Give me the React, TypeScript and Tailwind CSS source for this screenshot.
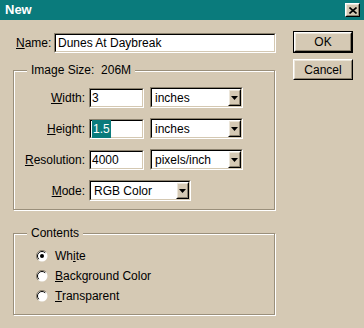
import React from 'react';

const font = "font-['Liberation_Sans',Arial,sans-serif]";

function Sunken({ className, children }: { className: string; children?: React.ReactNode }) {
  return (
    <div className={`border border-t-[#8b816e] border-l-[#8b816e] border-r-white border-b-white ${className}`}>
      <div className="flex h-full items-center border border-t-black border-l-black border-r-[#d4c8b2] border-b-[#d4c8b2] bg-white">
        {children}
      </div>
    </div>
  );
}

function Raised({ className, children }: { className: string; children?: React.ReactNode }) {
  return (
    <div className={`border border-t-white border-l-white border-r-black border-b-black bg-[#d5c9b4] ${className}`}>
      <div className="flex h-full items-center justify-center border border-t-[#ece6da] border-l-[#ece6da] border-r-[#8b816e] border-b-[#8b816e]">
        {children}
      </div>
    </div>
  );
}

function Select({ value, width }: { value: string; width: string }) {
  return (
    <Sunken className={`h-[21px] ${width}`}>
      <span className="flex-1 pl-[3px] text-black">{value}</span>
      <Raised className="h-full w-[13px]">
        <svg width="7" height="4" viewBox="0 0 7 4">
          <path d="M0 0h7L3.5 4z" fill="#000" />
        </svg>
      </Raised>
    </Sunken>
  );
}

function Radio({ checked, children }: { checked?: boolean; children: React.ReactNode }) {
  return (
    <div className="flex h-[16px] items-center">
      <svg width="12" height="12" viewBox="0 0 12 12" className="ml-[22px]">
        <circle cx="6" cy="6" r="5.5" fill="#fff" />
        <path d="M10 2A5.5 5.5 0 0 0 2 10" stroke="#8b816e" strokeWidth="1" fill="none" />
        <path d="M9.2 2.8A4.5 4.5 0 0 0 2.8 9.2" stroke="#000" strokeWidth="1" fill="none" />
        {checked && <circle cx="6" cy="6" r="2" fill="#000" />}
      </svg>
      <span className="ml-[7px]">{children}</span>
    </div>
  );
}

function Group({ label, className, children }: { label: string; className: string; children: React.ReactNode }) {
  return (
    <div
      className={`relative w-[262px] border border-[#9a8f7b] shadow-[1px_1px_0_#fff,inset_1px_1px_0_#fff] ${className}`}
    >
      <span className="absolute -top-[8px] left-[13px] whitespace-pre bg-[#d5c9b4] px-[4px] leading-[14px]">
        {label}
      </span>
      {children}
    </div>
  );
}

function Row({ label, children }: { label: React.ReactNode; children: React.ReactNode }) {
  return (
    <div className="flex items-center">
      <span className="mr-[4px] w-[71px] text-right">{label}</span>
      {children}
    </div>
  );
}

export default function App() {
  return (
    <div className={`h-[328px] w-[364px] overflow-hidden bg-[#d5c9b4] text-[12px] text-black ${font}`}>
      {/* barra de título */}
      <div className="flex h-[20px] items-center justify-between bg-[#0a7b7c] pl-[5px] pr-[4px]">
        <span className="text-[13px] font-bold text-white">New</span>
        <Raised className="h-[14px] w-[15px]">
          <svg width="8" height="7" viewBox="0 0 8 7">
            <path d="M0.5 0.5l7 6M7.5 0.5l-7 6" stroke="#000" strokeWidth="1.6" />
          </svg>
        </Raised>
      </div>

      <div className="flex">
        <div className="ml-[13px] w-[263px]">
          <div className="mt-[13px] flex h-[20px] items-center">
            <span className="ml-[3px] w-[38px]">
              <u>N</u>ame:
            </span>
            <Sunken className="h-[20px] w-[222px]">
              <span className="pl-[2px]">Dunes At Daybreak</span>
            </Sunken>
          </div>

          <Group label="Image Size:  206M" className="mt-[17px] h-[140px]">
            <div className="flex flex-col gap-[10px] pt-[16px]">
              <Row
                label={
                  <>
                    <u>W</u>idth:
                  </>
                }
              >
                <Sunken className="h-[20px] w-[55px]">
                  <span className="pl-[1px]">3</span>
                </Sunken>
                <div className="ml-[6px]">
                  <Select value="inches" width="w-[93px]" />
                </div>
              </Row>
              <Row
                label={
                  <>
                    <u>H</u>eight:
                  </>
                }
              >
                <Sunken className="h-[20px] w-[55px]">
                  <span className="ml-[1px] bg-[#0a7b7c] px-[1px] text-white">1.5</span>
                </Sunken>
                <div className="ml-[6px]">
                  <Select value="inches" width="w-[93px]" />
                </div>
              </Row>
              <Row
                label={
                  <>
                    <u>R</u>esolution:
                  </>
                }
              >
                <Sunken className="h-[20px] w-[55px]">
                  <span className="pl-[1px]">4000</span>
                </Sunken>
                <div className="ml-[6px]">
                  <Select value="pixels/inch" width="w-[93px]" />
                </div>
              </Row>
              <Row
                label={
                  <>
                    <u>M</u>ode:
                  </>
                }
              >
                <Select value="RGB Color" width="w-[102px]" />
              </Row>
            </div>
          </Group>

          <Group label="Contents" className="mt-[23px] h-[82px]">
            <div className="flex flex-col gap-[4px] pt-[14px]">
              <Radio checked>
                Wh<u>i</u>te
              </Radio>
              <Radio>
                <u>B</u>ackground Color
              </Radio>
              <Radio>
                <u>T</u>ransparent
              </Radio>
            </div>
          </Group>
        </div>

        <div className="ml-[17px] mt-[11px] flex w-[60px] flex-col gap-[6px]">
          <div className="border border-black">
            <Raised className="h-[20px] w-full">OK</Raised>
          </div>
          <Raised className="h-[21px] w-full">Cancel</Raised>
        </div>
      </div>
    </div>
  );
}
